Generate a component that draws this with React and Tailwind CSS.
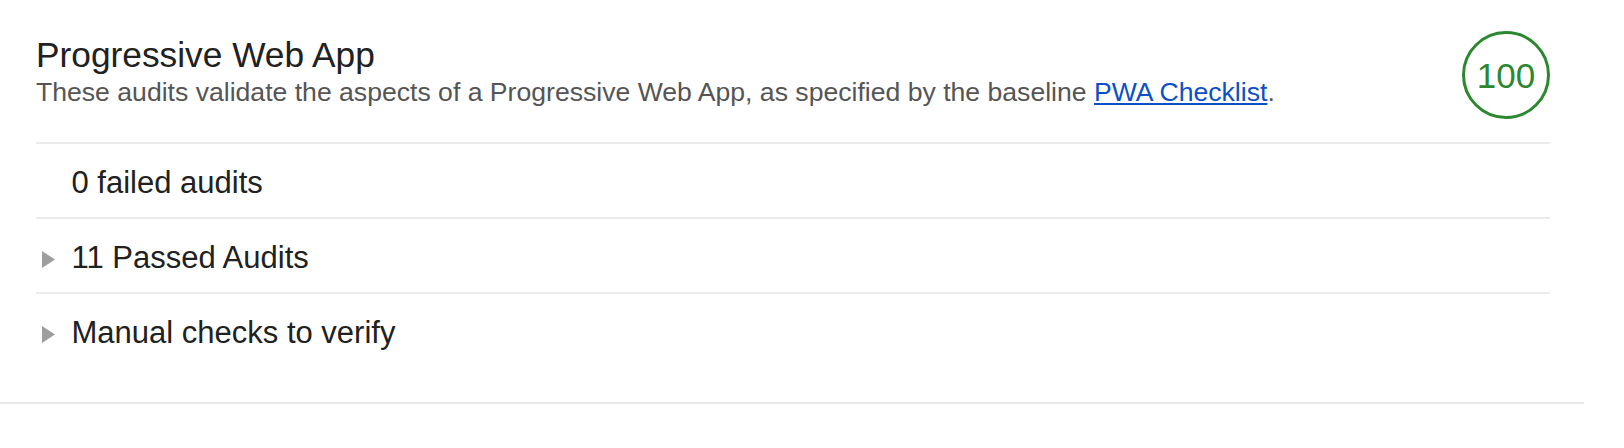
import React from "react";

function Triangle() {
  return (
    <svg width="14" height="17" viewBox="0 0 14 17" className="block">
      <polygon points="0,0 13,8.5 0,17" fill="#9e9e9e" />
    </svg>
  );
}

function Row({ label, collapsible, last }) {
  return (
    <div className={last ? "flex border-t-2 border-[#ebebeb] pt-[23px] pb-[19px]" : "flex border-t-2 border-[#ebebeb] pt-[23px] pb-[19px]"}>
      <div className="w-[35.5px] shrink-0 pl-[6px] pt-[9px]">
        {collapsible ? <Triangle /> : null}
      </div>
      <div className="text-[31px] leading-[31px] text-[#212121]">{label}</div>
    </div>
  );
}

export default function App() {
  return (
    <div className="w-[1624px] h-[448px] bg-white font-['Liberation_Sans',Arial,Helvetica,sans-serif]">
      <div className="w-[1584px] border-b-2 border-[#e8e8e8] pb-[35px]">
        <div className="pl-[36px] pr-[34px] pt-[31px]">
          <div className="flex justify-between items-start h-[111px]">
            <div className="pt-[6px]">
              <div className="text-[35.3px] leading-[35px] text-[#212121]">Progressive Web App</div>
              <div className="mt-[7px] text-[26.6px] leading-[26px] text-[#555555]">
                These audits validate the aspects of a Progressive Web App, as specified by the baseline{" "}
                <a href="#" className="text-[#0c50c7] underline">PWA Checklist</a>.
              </div>
            </div>
            <div className="w-[88px] h-[88px] rounded-full border-[3px] border-[#2b882f] flex items-center justify-center">
              <span className="text-[35px] leading-[35px] text-[#2b882f]">100</span>
            </div>
          </div>
          <Row label="0 failed audits" collapsible={false} />
          <Row label="11 Passed Audits" collapsible={true} />
          <Row label="Manual checks to verify" collapsible={true} last={true} />
        </div>
      </div>
    </div>
  );
}
